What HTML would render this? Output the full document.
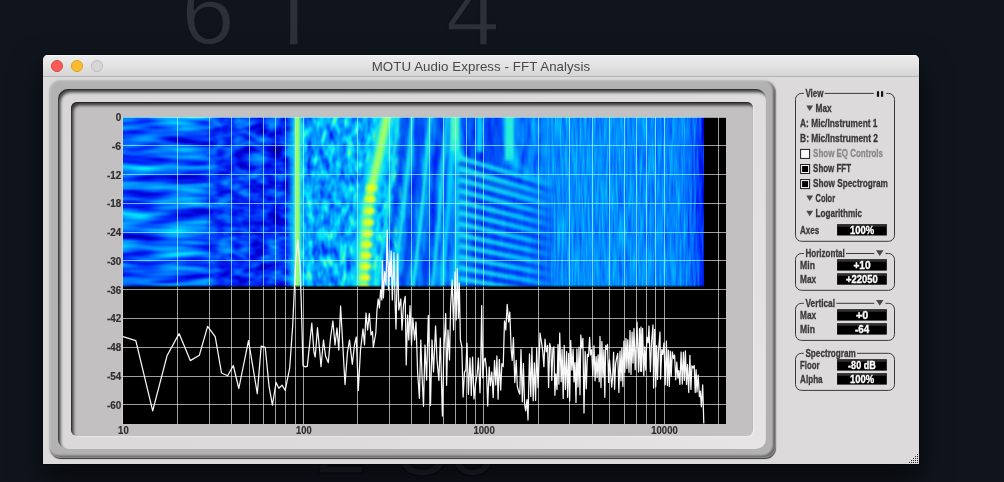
<!DOCTYPE html>
<html><head><meta charset="utf-8"><title>MOTU Audio Express - FFT Analysis</title>
<style>
html,body{margin:0;padding:0}
body{width:1004px;height:482px;overflow:hidden;position:relative;background:#10151d;font-family:"Liberation Sans",sans-serif}
.bg{position:absolute;left:0;top:0;width:1004px;height:482px;background:#10151d}
.clk{position:absolute;font-size:97px;line-height:97px;height:97px;color:#2b303a;white-space:pre;-webkit-text-stroke:1.7px #0f141b}
.win{position:absolute;left:43px;top:55px;width:876px;height:409px;background:#dcdadb;border-radius:5px 5px 0 0;overflow:hidden;box-shadow:0 0 0 .5px rgba(0,0,0,.6),0 14px 30px 2px rgba(0,0,0,.6)}
.tb{position:absolute;left:0;top:0;width:876px;height:21px;background:linear-gradient(#ececec,#e4e4e4 45%,#d5d5d5);border-bottom:1px solid #b4b2b3;box-shadow:inset 0 1px 0 #f6f6f6}
.tl{position:absolute;top:5px;width:12px;height:12px;border-radius:50%;box-sizing:border-box}
.title{position:absolute;left:0;top:1px;width:876px;height:22px;line-height:22px;text-align:center;font-size:13.3px;letter-spacing:.07px;color:#4a4849;will-change:transform}
.b1{position:absolute;left:6.5px;top:26px;width:725.5px;height:375.8px;border-radius:11px;background:#b2b2b2;box-shadow:0 0 1.5px .5px rgba(180,180,180,.85),.7px 1.3px .8px rgba(0,0,0,.85),inset .6px .6px 1px rgba(198,198,198,.7),inset -2px -1.6px 2px rgba(0,0,0,.42)}
.b2{position:absolute;left:15px;top:34px;width:708px;height:360px;border-radius:10px;background:linear-gradient(135deg,#d8d6d7 0%,#dcdadb 55%,#e6e4e5 100%);box-shadow:inset 2.6px 3.4px 3px rgba(0,0,0,.66),inset .6px 1px 1px rgba(0,0,0,.45)}
.b3{position:absolute;left:28px;top:47px;width:682px;height:333.5px;border-radius:6px;background:#c2c0c1;box-shadow:inset 2.6px 3.4px 3px rgba(0,0,0,.68),inset .6px 1px 1px rgba(0,0,0,.45),1px 1px 1.5px rgba(255,255,255,.4)}
svg{position:absolute;left:0;top:0;will-change:transform}
</style></head><body>
<div class="bg"></div>
<div class="clk" style="left:181px;top:-38px">6</div>
<div class="clk" style="left:265px;top:-37.5px;clip-path:inset(0 21.4px 0 25px)">1</div>
<div class="clk" style="left:445.7px;top:-37.5px">4</div>
<div class="clk" style="left:314px;top:391px;color:#1f232c;-webkit-text-stroke-color:#0b0e14">2</div>
<div class="clk" style="left:395.5px;top:393px;color:#1f232c;-webkit-text-stroke-color:#0b0e14">3</div>
<div class="clk" style="left:446px;top:392.5px;color:#1f232c;-webkit-text-stroke-color:#0b0e14">0</div>
<div class="win">
<div class="tb"></div>
<div class="tl" style="left:8px;background:#fc5b57;border:.8px solid #dd423d"></div>
<div class="tl" style="left:28px;background:#fdbc2e;border:.8px solid #d9a022"></div>
<div class="tl" style="left:48px;background:#d6d6d6;border:.8px solid #bcbcbc"></div>
<div class="title">MOTU Audio Express - FFT Analysis</div>
<div class="b1"></div><div class="b2"></div><div class="b3"></div>
</div>

<svg width="1004" height="482" viewBox="0 0 1004 482" font-family="'Liberation Sans',sans-serif">
<rect x="123.0" y="117.0" width="603.0" height="307.0" fill="#000"/>
<defs>
<clipPath id="cs"><rect x="123" y="117" width="581" height="170"/></clipPath>
<filter id="fA" filterUnits="userSpaceOnUse" x="123" y="117" width="96" height="170" color-interpolation-filters="sRGB"><feTurbulence type="fractalNoise" baseFrequency=".019 .115" numOctaves="2" seed="7" result="n"/><feColorMatrix in="n" type="matrix" values="1 0 0 0 0 1 0 0 0 0 1 0 0 0 0 0 0 0 0 1" result="ng"/><feComposite in="SourceGraphic" in2="ng" operator="arithmetic" k1="0" k2="1" k3="0.88" k4="-0.440" result="s"/><feComponentTransfer in="s"><feFuncR type="table" tableValues="0.000 0.000 0.000 0.000 0.000 0.000 0.353 0.745 1.000"/><feFuncG type="table" tableValues="0.000 0.000 0.176 0.431 0.647 0.882 1.000 1.000 1.000"/><feFuncB type="table" tableValues="0.588 0.843 0.980 1.000 1.000 1.000 0.667 0.275 0.000"/></feComponentTransfer></filter>
<linearGradient id="gA" x1="110" x2="225" gradientUnits="userSpaceOnUse"><stop offset="0.000" stop-color="#5c5c5c"/><stop offset="0.348" stop-color="#595959"/><stop offset="1.000" stop-color="#4f4f4f"/></linearGradient>
<filter id="fB" filterUnits="userSpaceOnUse" x="205" y="117" width="96" height="170" color-interpolation-filters="sRGB"><feTurbulence type="fractalNoise" baseFrequency=".06 .11" numOctaves="2" seed="3" result="n"/><feColorMatrix in="n" type="matrix" values="1 0 0 0 0 1 0 0 0 0 1 0 0 0 0 0 0 0 0 1" result="ng"/><feComposite in="SourceGraphic" in2="ng" operator="arithmetic" k1="0" k2="1" k3="0.66" k4="-0.330" result="s"/><feComponentTransfer in="s"><feFuncR type="table" tableValues="0.000 0.000 0.000 0.000 0.000 0.000 0.353 0.745 1.000"/><feFuncG type="table" tableValues="0.000 0.000 0.176 0.431 0.647 0.882 1.000 1.000 1.000"/><feFuncB type="table" tableValues="0.588 0.843 0.980 1.000 1.000 1.000 0.667 0.275 0.000"/></feComponentTransfer></filter>
<linearGradient id="gB" x1="200" x2="300" gradientUnits="userSpaceOnUse"><stop offset="0.000" stop-color="#4c4c4c"/><stop offset="0.400" stop-color="#424242"/><stop offset="0.840" stop-color="#3e3e3e"/><stop offset="1.000" stop-color="#5c5c5c"/></linearGradient>
<linearGradient id="mgB" x1="205" x2="219" gradientUnits="userSpaceOnUse"><stop offset="0" stop-color="#000"/><stop offset="1" stop-color="#fff"/></linearGradient>
<mask id="mB" maskUnits="userSpaceOnUse" x="205" y="117" width="96" height="170"><rect x="205" y="117" width="96" height="170" fill="url(#mgB)"/></mask>
<filter id="fC" filterUnits="userSpaceOnUse" x="287" y="117" width="120" height="170" color-interpolation-filters="sRGB"><feTurbulence type="fractalNoise" baseFrequency=".15 .07" numOctaves="2" seed="11" result="n"/><feColorMatrix in="n" type="matrix" values="1 0 0 0 0 1 0 0 0 0 1 0 0 0 0 0 0 0 0 1" result="ng"/><feComposite in="SourceGraphic" in2="ng" operator="arithmetic" k1="0" k2="1" k3="0.8" k4="-0.400" result="s"/><feComponentTransfer in="s"><feFuncR type="table" tableValues="0.000 0.000 0.000 0.000 0.000 0.000 0.353 0.745 1.000"/><feFuncG type="table" tableValues="0.000 0.000 0.176 0.431 0.647 0.882 1.000 1.000 1.000"/><feFuncB type="table" tableValues="0.588 0.843 0.980 1.000 1.000 1.000 0.667 0.275 0.000"/></feComponentTransfer></filter>
<linearGradient id="gC" x1="285" x2="410" gradientUnits="userSpaceOnUse"><stop offset="0.000" stop-color="#858585"/><stop offset="0.136" stop-color="#7d7d7d"/><stop offset="0.360" stop-color="#7d7d7d"/><stop offset="0.520" stop-color="#858585"/><stop offset="0.800" stop-color="#8a8a8a"/><stop offset="1.000" stop-color="#757575"/></linearGradient>
<linearGradient id="mgC" x1="287" x2="301" gradientUnits="userSpaceOnUse"><stop offset="0" stop-color="#000"/><stop offset="1" stop-color="#fff"/></linearGradient>
<mask id="mC" maskUnits="userSpaceOnUse" x="287" y="117" width="120" height="170"><rect x="287" y="117" width="120" height="170" fill="url(#mgC)"/></mask>
<filter id="fD" filterUnits="userSpaceOnUse" x="393" y="117" width="159" height="170" color-interpolation-filters="sRGB"><feTurbulence type="fractalNoise" baseFrequency=".16 .035" numOctaves="2" seed="13" result="n"/><feColorMatrix in="n" type="matrix" values="1 0 0 0 0 1 0 0 0 0 1 0 0 0 0 0 0 0 0 1" result="ng"/><feComposite in="SourceGraphic" in2="ng" operator="arithmetic" k1="0" k2="1" k3="0.45" k4="-0.225" result="s"/><feComponentTransfer in="s"><feFuncR type="table" tableValues="0.000 0.000 0.000 0.000 0.000 0.000 0.353 0.745 1.000"/><feFuncG type="table" tableValues="0.000 0.000 0.176 0.431 0.647 0.882 1.000 1.000 1.000"/><feFuncB type="table" tableValues="0.588 0.843 0.980 1.000 1.000 1.000 0.667 0.275 0.000"/></feComponentTransfer></filter>
<linearGradient id="gD" x1="390" x2="555" gradientUnits="userSpaceOnUse"><stop offset="0.000" stop-color="#707070"/><stop offset="0.242" stop-color="#666666"/><stop offset="0.485" stop-color="#616161"/><stop offset="0.788" stop-color="#616161"/><stop offset="1.000" stop-color="#6e6e6e"/></linearGradient>
<linearGradient id="mgD" x1="393" x2="407" gradientUnits="userSpaceOnUse"><stop offset="0" stop-color="#000"/><stop offset="1" stop-color="#fff"/></linearGradient>
<mask id="mD" maskUnits="userSpaceOnUse" x="393" y="117" width="159" height="170"><rect x="393" y="117" width="159" height="170" fill="url(#mgD)"/></mask>
<filter id="fE" filterUnits="userSpaceOnUse" x="538" y="117" width="166" height="170" color-interpolation-filters="sRGB"><feTurbulence type="fractalNoise" baseFrequency=".5 .028" numOctaves="2" seed="5" result="n"/><feColorMatrix in="n" type="matrix" values="1 0 0 0 0 1 0 0 0 0 1 0 0 0 0 0 0 0 0 1" result="ng"/><feComposite in="SourceGraphic" in2="ng" operator="arithmetic" k1="0" k2="1" k3="0.36" k4="-0.180" result="s"/><feComponentTransfer in="s"><feFuncR type="table" tableValues="0.000 0.000 0.000 0.000 0.000 0.000 0.353 0.745 1.000"/><feFuncG type="table" tableValues="0.000 0.000 0.176 0.431 0.647 0.882 1.000 1.000 1.000"/><feFuncB type="table" tableValues="0.588 0.843 0.980 1.000 1.000 1.000 0.667 0.275 0.000"/></feComponentTransfer></filter>
<linearGradient id="gE" x1="535" x2="704" gradientUnits="userSpaceOnUse"><stop offset="0.000" stop-color="#737373"/><stop offset="0.385" stop-color="#737373"/><stop offset="0.858" stop-color="#6e6e6e"/><stop offset="0.941" stop-color="#595959"/><stop offset="1.000" stop-color="#333333"/></linearGradient>
<linearGradient id="mgE" x1="538" x2="552" gradientUnits="userSpaceOnUse"><stop offset="0" stop-color="#000"/><stop offset="1" stop-color="#fff"/></linearGradient>
<mask id="mE" maskUnits="userSpaceOnUse" x="538" y="117" width="166" height="170"><rect x="538" y="117" width="166" height="170" fill="url(#mgE)"/></mask>
<filter id="b1" filterUnits="userSpaceOnUse" x="100" y="90" width="640" height="230"><feGaussianBlur stdDeviation="1.1"/></filter>
<filter id="b15" filterUnits="userSpaceOnUse" x="100" y="90" width="640" height="230"><feGaussianBlur stdDeviation="1.7"/></filter>
<filter id="b2" filterUnits="userSpaceOnUse" x="100" y="90" width="640" height="230"><feGaussianBlur stdDeviation="2.4"/></filter>
<linearGradient id="sg1" x1="459" x2="556" gradientUnits="userSpaceOnUse"><stop offset="0" stop-color="#19e9e7"/><stop offset=".72" stop-color="#00d5ff" stop-opacity=".85"/><stop offset="1" stop-color="#00bdff" stop-opacity="0"/></linearGradient>
<linearGradient id="sg2" x1="459" x2="556" gradientUnits="userSpaceOnUse"><stop offset="0" stop-color="#001bec"/><stop offset=".72" stop-color="#0029f7" stop-opacity=".85"/><stop offset="1" stop-color="#0047fc" stop-opacity="0"/></linearGradient>
</defs>
<g><g filter="url(#fA)"><rect x="123" y="117" width="96" height="170" fill="url(#gA)"/></g></g>
<g mask="url(#mB)"><g filter="url(#fB)"><rect x="205" y="117" width="96" height="170" fill="url(#gB)"/></g></g>
<g mask="url(#mC)"><g filter="url(#fC)"><rect x="287" y="117" width="120" height="170" fill="url(#gC)"/></g></g>
<g mask="url(#mD)"><g filter="url(#fD)"><rect x="393" y="117" width="159" height="170" fill="url(#gD)"/></g></g>
<g mask="url(#mE)"><g filter="url(#fE)"><rect x="538" y="117" width="166" height="170" fill="url(#gE)"/></g></g>
<g clip-path="url(#cs)"><rect x="291.5" y="110" width="11.5" height="185" fill="#00dfff" filter="url(#b2)" opacity=".85"/><rect x="294.8" y="110" width="5" height="185" fill="#a2ff62" filter="url(#b1)"/><path d="M388,110 C381,150 372,185 368.5,200 C365,225 363,260 362,294" fill="none" stroke="#00d5ff" stroke-width="21" filter="url(#b2)" opacity=".8"/><path d="M388,110 C381,150 372,185 368.5,200 C365,225 363,260 362,294" fill="none" stroke="#53fdb1" stroke-width="10.5" filter="url(#b15)" opacity=".95"/><path d="M388,110 C381,150 372,185 368.5,200" fill="none" stroke="#aaff5a" stroke-width="5" filter="url(#b15)"/><ellipse cx="371.5" cy="188" rx="5.6" ry="3.8" fill="#e5ff1c" filter="url(#b15)"/><ellipse cx="370.4" cy="199.5" rx="5.6" ry="3.8" fill="#e5ff1c" filter="url(#b15)"/><ellipse cx="369.4" cy="211" rx="5.6" ry="3.8" fill="#e5ff1c" filter="url(#b15)"/><ellipse cx="368.5" cy="222.5" rx="5.6" ry="3.8" fill="#e5ff1c" filter="url(#b15)"/><ellipse cx="367.7" cy="233.5" rx="5.6" ry="3.8" fill="#e5ff1c" filter="url(#b15)"/><ellipse cx="366.9" cy="244.5" rx="5.6" ry="3.8" fill="#e5ff1c" filter="url(#b15)"/><ellipse cx="366.2" cy="255.5" rx="5.6" ry="3.8" fill="#e5ff1c" filter="url(#b15)"/><ellipse cx="365.6" cy="266.5" rx="5.6" ry="3.8" fill="#e5ff1c" filter="url(#b15)"/><ellipse cx="365.0" cy="277.5" rx="5.6" ry="3.8" fill="#e5ff1c" filter="url(#b15)"/><ellipse cx="364.5" cy="288" rx="5.6" ry="3.8" fill="#e5ff1c" filter="url(#b15)"/><path d="M406,110 Q397.5,200 383,294" fill="none" stroke="#0010e4" stroke-width="6" opacity="0.5" filter="url(#b15)"/><path d="M421.5,110 Q414.75,200 402,294" fill="none" stroke="#0010e4" stroke-width="6.5" opacity="0.55" filter="url(#b15)"/><path d="M439.5,110 Q434.0,200 422.5,294" fill="none" stroke="#0010e4" stroke-width="6" opacity="0.5" filter="url(#b15)"/><path d="M398.5,110 Q390.0,200 375.5,294" fill="none" stroke="#19e9e7" stroke-width="3.4" opacity="0.95" filter="url(#b1)"/><path d="M413,110 Q405.75,200 392.5,294" fill="none" stroke="#19e9e7" stroke-width="3.6" opacity="0.9" filter="url(#b1)"/><path d="M430.5,110 Q424.25,200 412,294" fill="none" stroke="#19e9e7" stroke-width="3.8" opacity="0.95" filter="url(#b1)"/><path d="M446.5,110 Q442.0,200 431.5,294" fill="none" stroke="#19e9e7" stroke-width="3.2" opacity="0.85" filter="url(#b1)"/><rect x="463" y="110" width="40" height="58" fill="#001bec" opacity=".45" filter="url(#b2)"/><path d="M454.7,110 V146 Q456,166 478,176 L548,204" fill="none" stroke="#00d5ff" stroke-width="13" filter="url(#b2)" opacity=".7"/><rect x="450.6" y="110" width="8.4" height="42" fill="#4cfab8" filter="url(#b1)"/><path d="M454.7,140 Q455,164 478,176 L520,193" fill="none" stroke="#28eeda" stroke-width="5.5" filter="url(#b15)" opacity=".9"/><path d="M452,150 Q448,220 441,294" fill="none" stroke="#04e2fc" stroke-width="4.5" filter="url(#b1)" opacity=".8"/><path d="M458,152 Q459,220 455,294" fill="none" stroke="#12e7ee" stroke-width="5" filter="url(#b1)" opacity=".8"/><rect x="503" y="110" width="13" height="54" fill="#00cbff" filter="url(#b2)" opacity=".7"/><rect x="505.3" y="110" width="8.4" height="50" fill="#28eeda" filter="url(#b1)"/><rect x="476.8" y="110" width="5.6" height="42" fill="#00dfff" filter="url(#b1)" opacity=".85"/><path d="M510,156 Q522,172 550,186" fill="none" stroke="#00d5ff" stroke-width="5" opacity=".6" filter="url(#b2)"/><path d="M459,160 L552,186 V294 H459Z" fill="#001bec" opacity=".35" filter="url(#b2)"/><path d="M459,158.0 L556,187.1" fill="none" stroke="url(#sg1)" stroke-width="5.2" opacity=".95" filter="url(#b15)"/><path d="M459,163.5 L556,192.6" fill="none" stroke="url(#sg2)" stroke-width="5.4" opacity=".6" filter="url(#b15)"/><path d="M459,169.0 L556,196.9" fill="none" stroke="url(#sg1)" stroke-width="5.2" opacity=".95" filter="url(#b15)"/><path d="M459,174.5 L556,202.4" fill="none" stroke="url(#sg2)" stroke-width="5.4" opacity=".6" filter="url(#b15)"/><path d="M459,180.0 L556,206.8" fill="none" stroke="url(#sg1)" stroke-width="5.2" opacity=".95" filter="url(#b15)"/><path d="M459,185.5 L556,212.3" fill="none" stroke="url(#sg2)" stroke-width="5.4" opacity=".6" filter="url(#b15)"/><path d="M459,191.0 L556,216.6" fill="none" stroke="url(#sg1)" stroke-width="5.2" opacity=".95" filter="url(#b15)"/><path d="M459,196.5 L556,222.1" fill="none" stroke="url(#sg2)" stroke-width="5.4" opacity=".6" filter="url(#b15)"/><path d="M459,202.0 L556,226.4" fill="none" stroke="url(#sg1)" stroke-width="5.2" opacity=".95" filter="url(#b15)"/><path d="M459,207.5 L556,231.9" fill="none" stroke="url(#sg2)" stroke-width="5.4" opacity=".6" filter="url(#b15)"/><path d="M459,213.0 L556,236.3" fill="none" stroke="url(#sg1)" stroke-width="5.2" opacity=".95" filter="url(#b15)"/><path d="M459,218.5 L556,241.8" fill="none" stroke="url(#sg2)" stroke-width="5.4" opacity=".6" filter="url(#b15)"/><path d="M459,224.0 L556,246.1" fill="none" stroke="url(#sg1)" stroke-width="5.2" opacity=".95" filter="url(#b15)"/><path d="M459,229.5 L556,251.6" fill="none" stroke="url(#sg2)" stroke-width="5.4" opacity=".6" filter="url(#b15)"/><path d="M459,235.0 L556,256.0" fill="none" stroke="url(#sg1)" stroke-width="5.2" opacity=".95" filter="url(#b15)"/><path d="M459,240.5 L556,261.5" fill="none" stroke="url(#sg2)" stroke-width="5.4" opacity=".6" filter="url(#b15)"/><path d="M459,246.0 L556,265.8" fill="none" stroke="url(#sg1)" stroke-width="5.2" opacity=".95" filter="url(#b15)"/><path d="M459,251.5 L556,271.3" fill="none" stroke="url(#sg2)" stroke-width="5.4" opacity=".6" filter="url(#b15)"/><path d="M459,257.0 L556,275.6" fill="none" stroke="url(#sg1)" stroke-width="5.2" opacity=".95" filter="url(#b15)"/><path d="M459,262.5 L556,281.1" fill="none" stroke="url(#sg2)" stroke-width="5.4" opacity=".6" filter="url(#b15)"/><path d="M459,268.0 L556,285.5" fill="none" stroke="url(#sg1)" stroke-width="5.2" opacity=".95" filter="url(#b15)"/><path d="M459,273.5 L556,291.0" fill="none" stroke="url(#sg2)" stroke-width="5.4" opacity=".6" filter="url(#b15)"/><path d="M459,279.0 L556,295.3" fill="none" stroke="url(#sg1)" stroke-width="5.2" opacity=".95" filter="url(#b15)"/><path d="M459,284.5 L556,300.8" fill="none" stroke="url(#sg2)" stroke-width="5.4" opacity=".6" filter="url(#b15)"/><path d="M459,290.0 L556,305.1" fill="none" stroke="url(#sg1)" stroke-width="5.2" opacity=".95" filter="url(#b15)"/><path d="M459,295.5 L556,310.6" fill="none" stroke="url(#sg2)" stroke-width="5.4" opacity=".6" filter="url(#b15)"/><rect x="456" y="166" width="14" height="130" fill="#00dfff" opacity=".35" filter="url(#b2)"/></g>
<defs><clipPath id="clA"><rect x="123" y="117" width="581" height="170"/></clipPath><clipPath id="clB"><path d="M123,287H704V117H726V424H123Z"/></clipPath></defs>
<g id="grid" fill="#fff" fill-opacity=".62" shape-rendering="crispEdges" clip-path="url(#clB)"><rect x="177" y="117.0" width="1" height="307.0"/><rect x="209" y="117.0" width="1" height="307.0"/><rect x="231" y="117.0" width="1" height="307.0"/><rect x="249" y="117.0" width="1" height="307.0"/><rect x="263" y="117.0" width="1" height="307.0"/><rect x="275" y="117.0" width="1" height="307.0"/><rect x="285" y="117.0" width="1" height="307.0"/><rect x="295" y="117.0" width="1" height="307.0"/><rect x="303" y="117.0" width="1" height="307.0"/><rect x="357" y="117.0" width="1" height="307.0"/><rect x="389" y="117.0" width="1" height="307.0"/><rect x="411" y="117.0" width="1" height="307.0"/><rect x="429" y="117.0" width="1" height="307.0"/><rect x="443" y="117.0" width="1" height="307.0"/><rect x="455" y="117.0" width="1" height="307.0"/><rect x="466" y="117.0" width="1" height="307.0"/><rect x="475" y="117.0" width="1" height="307.0"/><rect x="483" y="117.0" width="1" height="307.0"/><rect x="538" y="117.0" width="1" height="307.0"/><rect x="569" y="117.0" width="1" height="307.0"/><rect x="592" y="117.0" width="1" height="307.0"/><rect x="609" y="117.0" width="1" height="307.0"/><rect x="624" y="117.0" width="1" height="307.0"/><rect x="636" y="117.0" width="1" height="307.0"/><rect x="646" y="117.0" width="1" height="307.0"/><rect x="655" y="117.0" width="1" height="307.0"/><rect x="664" y="117.0" width="1" height="307.0"/><rect x="718" y="117.0" width="1" height="307.0"/><rect x="123.0" y="117" width="603.0" height="1"/><rect x="123.0" y="145" width="603.0" height="1"/><rect x="123.0" y="174" width="603.0" height="1"/><rect x="123.0" y="203" width="603.0" height="1"/><rect x="123.0" y="232" width="603.0" height="1"/><rect x="123.0" y="260" width="603.0" height="1"/><rect x="123.0" y="289" width="603.0" height="1"/><rect x="123.0" y="318" width="603.0" height="1"/><rect x="123.0" y="347" width="603.0" height="1"/><rect x="123.0" y="376" width="603.0" height="1"/><rect x="123.0" y="404" width="603.0" height="1"/></g>
<g fill="#a8ffff" fill-opacity=".66" shape-rendering="crispEdges" clip-path="url(#clA)"><rect x="177" y="117.0" width="1" height="307.0"/><rect x="209" y="117.0" width="1" height="307.0"/><rect x="231" y="117.0" width="1" height="307.0"/><rect x="249" y="117.0" width="1" height="307.0"/><rect x="263" y="117.0" width="1" height="307.0"/><rect x="275" y="117.0" width="1" height="307.0"/><rect x="285" y="117.0" width="1" height="307.0"/><rect x="295" y="117.0" width="1" height="307.0"/><rect x="303" y="117.0" width="1" height="307.0"/><rect x="357" y="117.0" width="1" height="307.0"/><rect x="389" y="117.0" width="1" height="307.0"/><rect x="411" y="117.0" width="1" height="307.0"/><rect x="429" y="117.0" width="1" height="307.0"/><rect x="443" y="117.0" width="1" height="307.0"/><rect x="455" y="117.0" width="1" height="307.0"/><rect x="466" y="117.0" width="1" height="307.0"/><rect x="475" y="117.0" width="1" height="307.0"/><rect x="483" y="117.0" width="1" height="307.0"/><rect x="538" y="117.0" width="1" height="307.0"/><rect x="569" y="117.0" width="1" height="307.0"/><rect x="592" y="117.0" width="1" height="307.0"/><rect x="609" y="117.0" width="1" height="307.0"/><rect x="624" y="117.0" width="1" height="307.0"/><rect x="636" y="117.0" width="1" height="307.0"/><rect x="646" y="117.0" width="1" height="307.0"/><rect x="655" y="117.0" width="1" height="307.0"/><rect x="664" y="117.0" width="1" height="307.0"/><rect x="718" y="117.0" width="1" height="307.0"/><rect x="123.0" y="117" width="603.0" height="1"/><rect x="123.0" y="145" width="603.0" height="1"/><rect x="123.0" y="174" width="603.0" height="1"/><rect x="123.0" y="203" width="603.0" height="1"/><rect x="123.0" y="232" width="603.0" height="1"/><rect x="123.0" y="260" width="603.0" height="1"/><rect x="123.0" y="289" width="603.0" height="1"/><rect x="123.0" y="318" width="603.0" height="1"/><rect x="123.0" y="347" width="603.0" height="1"/><rect x="123.0" y="376" width="603.0" height="1"/><rect x="123.0" y="404" width="603.0" height="1"/></g>
<rect x="122" y="117" width="1" height="307" fill="#fff" fill-opacity=".3"/>
<rect x="123" y="285.3" width="581" height="1" fill="#000" fill-opacity=".3"/><rect x="123" y="286.2" width="581" height=".9" fill="#000" fill-opacity=".7"/>
<polyline points="123.0,336.7 135.8,340.6 152.7,410.9 167.0,355.8 179.1,333.6 190.3,360.6 199.4,355.2 207.6,326.4 215.2,336.7 221.5,373.0 227.6,375.8 233.3,365.5 238.8,388.5 248.5,340.6 257.3,393.6 261.2,346.1 265.2,347.3 269.1,386.7 272.4,405.2 276.1,382.4 278.8,388.2 282.0,385.2 285.2,390.3 289.7,367.9 292.7,325.5 295.6,262.0 297.7,239.6 299.8,262.0 301.2,300.0 303.0,365.8 305.4,366.9 307.3,366.4 311.8,323.2 314.0,352.7 315.2,357.0 317.5,327.7 319.8,352.0 321.0,366.7 323.5,340.0 325.5,356.0 328.3,362.6 330.5,338.0 332.9,321.0 335.0,345.0 337.0,328.0 338.8,350.0 340.6,306.0 342.5,340.0 345.0,384.5 347.5,352.0 349.5,340.0 352.3,364.3 354.5,345.0 356.3,337.0 358.3,390.5 360.5,350.0 363.0,329.0 364.5,345.0 366.0,313.0 367.6,330.0 369.3,313.5 371.0,335.0 372.5,331.6 373.3,347.3 375.8,333.0 377.0,310.0 378.2,299.0 379.4,308.0 380.6,290.0 381.8,300.0 382.4,260.7 383.4,298.0 384.7,271.7 386.0,285.0 387.2,230.2 388.5,290.0 389.4,262.0 390.3,276.6 391.1,251.2 392.3,300.0 394.0,252.7 395.0,300.0 396.0,329.0 397.6,254.1 398.8,310.0 400.8,299.0 402.0,330.0 403.5,305.0 405.2,296.3 406.2,365.0 407.6,315.0 408.8,340.0 410.0,305.7 411.5,345.0 412.8,318.0 414.6,340.0 416.0,322.0 417.6,372.0 419.4,398.3 420.8,340.0 422.0,375.0 423.5,406.3 425.0,345.0 426.6,380.0 428.3,315.4 429.5,365.0 430.5,405.5 432.0,340.0 433.5,372.0 435.6,326.0 437.0,360.0 438.9,380.5 440.3,338.0 442.4,416.0 443.8,352.0 445.7,313.5 446.6,385.3 448.0,330.0 449.5,360.0 450.6,306.5 452.2,280.0 453.6,330.0 455.0,272.0 456.2,320.0 457.3,268.5 458.4,318.0 459.3,283.0 460.4,340.0 461.8,346.4 463.1,396.9 464.5,372.2 465.8,370.2 467.0,343.1 468.4,394.3 470.0,358.0 471.3,395.5 472.6,357.1 474.0,398.9 475.6,383.4 477.1,374.9 478.4,358.0 480.0,392.8 480.6,372.0 481.7,305.7 482.8,378.0 484.0,360.4 485.2,358.1 486.4,368.1 487.7,406.1 489.2,366.8 490.4,385.6 491.8,372.0 493.2,397.6 494.5,360.3 495.8,385.0 496.9,356.0 498.1,399.2 499.3,359.3 500.7,390.0 501.9,363.6 503.2,366.6 504.5,320.9 505.8,330.0 507.2,304.4 508.6,322.0 509.8,312.0 511.2,350.0 512.2,360.4 513.4,337.7 514.8,382.6 516.2,360.3 517.3,386.5 518.7,391.7 519.8,394.1 521.0,349.4 522.3,401.8 523.4,363.3 524.6,404.4 525.7,410.8 527.0,399.6 528.0,420.0 529.5,353.9 530.8,396.4 531.9,347.3 533.2,400.8 534.4,362.9 535.6,400.5 536.7,347.9 538.0,387.5 539.3,355.4 540.0,333.0 541.7,343.9 542.7,351.0 543.9,366.6 545.0,339.2 546.3,351.8 547.6,345.5 548.6,387.5 549.7,343.5 550.9,348.2 551.8,380.5 552.9,348.2 553.9,346.8 554.9,395.3 555.8,373.9 557.0,389.6 558.0,344.5 558.9,384.2 559.7,333.0 561.2,381.7 562.1,349.3 563.2,398.6 564.2,345.4 565.4,389.5 566.6,351.6 567.7,397.4 568.7,353.5 569.7,400.9 570.7,340.3 571.9,370.1 573.1,349.1 574.0,381.9 575.0,362.7 576.0,402.4 576.9,349.0 578.0,387.0 579.0,347.2 580.0,394.8 580.8,335.0 581.9,347.9 582.9,338.3 584.0,413.0 585.2,351.5 586.3,388.8 587.4,354.2 588.5,356.5 589.6,337.4 590.5,354.9 591.7,349.7 592.8,375.9 594.0,345.8 595.1,380.8 596.1,356.6 597.1,377.4 598.1,354.8 599.2,381.7 600.0,336.5 601.0,387.6 601.9,341.5 602.9,377.2 603.9,349.8 604.8,397.3 605.7,345.4 606.6,349.4 607.5,344.3 608.6,382.4 609.5,359.8 610.6,373.2 611.7,387.1 612.6,377.8 613.6,352.3 614.6,389.3 615.6,363.9 616.6,358.1 617.7,353.4 618.9,392.4 620.0,351.2 621.0,380.9 621.9,348.0 622.9,386.6 623.9,341.2 624.8,372.3 626.0,338.5 626.9,368.5 627.8,339.8 629.0,372.3 630.0,330.5 631.0,374.4 632.1,332.2 633.0,363.1 634.0,328.5 635.2,369.7 636.4,338.8 637.0,322.0 638.5,372.1 639.5,328.7 640.4,371.2 641.0,327.0 641.6,371.3 642.6,328.3 643.8,375.6 644.8,346.9 645.7,370.1 646.9,337.2 648.1,342.7 649.0,326.0 650.4,371.7 651.5,342.3 653.0,325.0 653.6,388.1 654.7,329.4 655.7,386.7 656.6,345.7 657.5,379.4 658.5,350.8 660.0,332.0 660.6,378.9 661.8,349.7 662.8,354.4 664.0,342.8 665.2,384.8 666.4,341.0 667.4,385.4 668.3,350.0 669.3,386.4 670.3,351.2 671.2,376.5 672.3,351.8 673.5,358.3 674.6,355.0 675.7,379.8 676.8,362.2 677.9,378.0 678.8,370.5 679.9,384.4 681.1,352.0 682.3,384.1 683.4,352.2 684.4,380.3 685.4,350.8 686.5,384.4 687.5,364.4 688.7,392.5 689.9,355.3 690.9,389.4 691.9,365.9 693.1,368.0 694.2,365.6 695.2,392.6 696.1,369.7 697.0,392.0 698.2,375.0 699.4,396.7 700.3,391.2 701.4,406.8 702.7,384.8 703.8,423.5" fill="none" stroke="#fff" stroke-width="1.25" stroke-linejoin="round" stroke-opacity=".97"/>
<g font-size="10.3" font-weight="bold" fill="#2f2d2e" stroke="#2f2d2e" stroke-width=".18"><text x="115.7" y="120.9" textLength="5.5" lengthAdjust="spacingAndGlyphs">0</text><text x="111.8" y="149.7" textLength="9.4" lengthAdjust="spacingAndGlyphs">-6</text><text x="106.9" y="178.5" textLength="14.3" lengthAdjust="spacingAndGlyphs">-12</text><text x="106.9" y="207.2" textLength="14.3" lengthAdjust="spacingAndGlyphs">-18</text><text x="106.9" y="236.0" textLength="14.3" lengthAdjust="spacingAndGlyphs">-24</text><text x="106.9" y="264.8" textLength="14.3" lengthAdjust="spacingAndGlyphs">-30</text><text x="106.9" y="293.6" textLength="14.3" lengthAdjust="spacingAndGlyphs">-36</text><text x="106.9" y="322.4" textLength="14.3" lengthAdjust="spacingAndGlyphs">-42</text><text x="106.9" y="351.1" textLength="14.3" lengthAdjust="spacingAndGlyphs">-48</text><text x="106.9" y="379.9" textLength="14.3" lengthAdjust="spacingAndGlyphs">-54</text><text x="106.9" y="408.7" textLength="14.3" lengthAdjust="spacingAndGlyphs">-60</text><text x="118.1" y="433.7" textLength="10.6" lengthAdjust="spacingAndGlyphs">10</text><text x="296.0" y="433.7" textLength="15.6" lengthAdjust="spacingAndGlyphs">100</text><text x="473.4" y="433.7" textLength="21.4" lengthAdjust="spacingAndGlyphs">1000</text><text x="651.3" y="433.7" textLength="26.4" lengthAdjust="spacingAndGlyphs">10000</text></g>
<path d="M824.7,93.4 H873.8 M886.3,93.4 H888.5 A6,6 0 0 1 894.5,99.4 V235.3 A6,6 0 0 1 888.5,241.3 H801.5 A6,6 0 0 1 795.5,235.3 V99.4 A6,6 0 0 1 801.5,93.4 H803.9" fill="none" stroke="#3a3839" stroke-width="1"/>
<text x="805.4" y="96.6" textLength="18.1" lengthAdjust="spacingAndGlyphs" font-size="10" font-weight="bold" fill="#3b393a" stroke="#3b393a" stroke-width=".3">View</text>
<rect x="876.9" y="91.2" width="2.2" height="5.6" fill="#111"/><rect x="881" y="91.2" width="2.2" height="5.6" fill="#111"/>
<path d="M806.3,105.5 h6.8 l-3.4,5.5z" fill="#4a4849"/>
<text x="815.5" y="111.5" textLength="16.1" lengthAdjust="spacingAndGlyphs" font-size="10" font-weight="bold" fill="#3b393a" stroke="#3b393a" stroke-width=".3">Max</text>
<text x="800.1" y="126.7" textLength="77.4" lengthAdjust="spacingAndGlyphs" font-size="10" font-weight="bold" fill="#3b393a" stroke="#3b393a" stroke-width=".3">A: Mic/Instrument 1</text>
<text x="800.1" y="141.6" textLength="77.9" lengthAdjust="spacingAndGlyphs" font-size="10" font-weight="bold" fill="#3b393a" stroke="#3b393a" stroke-width=".3">B: Mic/Instrument 2</text>
<rect x="800.6" y="149.4" width="9" height="9" fill="#fff" stroke="#1c1a1b" stroke-width="1"/>
<text x="813.1" y="156.7" textLength="69.9" lengthAdjust="spacingAndGlyphs" font-size="10" font-weight="bold" fill="#8b898a" stroke="#8b898a" stroke-width=".3">Show EQ Controls</text>
<rect x="800.6" y="164.5" width="9" height="9" fill="#fff" stroke="#1c1a1b" stroke-width="1"/>
<rect x="802.1" y="166.0" width="6" height="6" fill="#000"/>
<text x="813.1" y="171.8" textLength="37.9" lengthAdjust="spacingAndGlyphs" font-size="10" font-weight="bold" fill="#3b393a" stroke="#3b393a" stroke-width=".3">Show FFT</text>
<rect x="800.6" y="179.6" width="9" height="9" fill="#fff" stroke="#1c1a1b" stroke-width="1"/>
<rect x="802.1" y="181.1" width="6" height="6" fill="#000"/>
<text x="813.1" y="186.9" textLength="74.8" lengthAdjust="spacingAndGlyphs" font-size="10" font-weight="bold" fill="#3b393a" stroke="#3b393a" stroke-width=".3">Show Spectrogram</text>
<path d="M806.3,195.6 h6.8 l-3.4,5.5z" fill="#4a4849"/>
<text x="815.5" y="201.6" textLength="19.6" lengthAdjust="spacingAndGlyphs" font-size="10" font-weight="bold" fill="#3b393a" stroke="#3b393a" stroke-width=".3">Color</text>
<path d="M806.3,210.7 h6.8 l-3.4,5.5z" fill="#4a4849"/>
<text x="815.5" y="216.6" textLength="46.5" lengthAdjust="spacingAndGlyphs" font-size="10" font-weight="bold" fill="#3b393a" stroke="#3b393a" stroke-width=".3">Logarithmic</text>
<text x="800.1" y="233.6" textLength="19.1" lengthAdjust="spacingAndGlyphs" font-size="10" font-weight="bold" fill="#3b393a" stroke="#3b393a" stroke-width=".3">Axes</text>
<rect x="837.1" y="224.3" width="49.7" height="11.2" fill="#000"/><rect x="837.1" y="224.3" width="49.7" height="2.4" fill="#2e2e2e"/>
<text x="849.9" y="233.9" textLength="24.2" lengthAdjust="spacingAndGlyphs" font-size="11.2" font-weight="bold" fill="#fff" stroke="#fff" stroke-width=".35">100%</text>
<path d="M846.0,253.5 H874.3 M885.5,253.5 H888.5 A6,6 0 0 1 894.5,259.5 V284.3 A6,6 0 0 1 888.5,290.3 H801.5 A6,6 0 0 1 795.5,284.3 V259.5 A6,6 0 0 1 801.5,253.5 H803.9" fill="none" stroke="#3a3839" stroke-width="1"/>
<text x="805.4" y="256.7" textLength="39.4" lengthAdjust="spacingAndGlyphs" font-size="10" font-weight="bold" fill="#3b393a" stroke="#3b393a" stroke-width=".3">Horizontal</text>
<path d="M876,250.3 h7.5 l-3.75,5.6z" fill="#4a4849"/>
<text x="800.1" y="268.6" textLength="14.8" lengthAdjust="spacingAndGlyphs" font-size="10" font-weight="bold" fill="#3b393a" stroke="#3b393a" stroke-width=".3">Min</text>
<rect x="837.1" y="259.4" width="49.7" height="11.2" fill="#000"/><rect x="837.1" y="259.4" width="49.7" height="2.4" fill="#2e2e2e"/>
<text x="853.4" y="269.0" textLength="17.3" lengthAdjust="spacingAndGlyphs" font-size="11.2" font-weight="bold" fill="#fff" stroke="#fff" stroke-width=".35">+10</text>
<text x="800.1" y="282.7" textLength="16.1" lengthAdjust="spacingAndGlyphs" font-size="10" font-weight="bold" fill="#3b393a" stroke="#3b393a" stroke-width=".3">Max</text>
<rect x="837.1" y="273.5" width="49.7" height="11.2" fill="#000"/><rect x="837.1" y="273.5" width="49.7" height="2.4" fill="#2e2e2e"/>
<text x="846.0" y="283.1" textLength="31.9" lengthAdjust="spacingAndGlyphs" font-size="11.2" font-weight="bold" fill="#fff" stroke="#fff" stroke-width=".35">+22050</text>
<path d="M836.3000000000001,303.3 H874.3 M885.5,303.3 H888.5 A6,6 0 0 1 894.5,309.3 V334.4 A6,6 0 0 1 888.5,340.4 H801.5 A6,6 0 0 1 795.5,334.4 V309.3 A6,6 0 0 1 801.5,303.3 H803.9" fill="none" stroke="#3a3839" stroke-width="1"/>
<text x="805.4" y="306.5" textLength="29.7" lengthAdjust="spacingAndGlyphs" font-size="10" font-weight="bold" fill="#3b393a" stroke="#3b393a" stroke-width=".3">Vertical</text>
<path d="M876,300.1 h7.5 l-3.75,5.6z" fill="#4a4849"/>
<text x="800.1" y="318.5" textLength="16.1" lengthAdjust="spacingAndGlyphs" font-size="10" font-weight="bold" fill="#3b393a" stroke="#3b393a" stroke-width=".3">Max</text>
<rect x="837.1" y="309.4" width="49.7" height="11.2" fill="#000"/><rect x="837.1" y="309.4" width="49.7" height="2.4" fill="#2e2e2e"/>
<text x="855.9" y="319.0" textLength="12.3" lengthAdjust="spacingAndGlyphs" font-size="11.2" font-weight="bold" fill="#fff" stroke="#fff" stroke-width=".35">+0</text>
<text x="800.1" y="332.6" textLength="14.8" lengthAdjust="spacingAndGlyphs" font-size="10" font-weight="bold" fill="#3b393a" stroke="#3b393a" stroke-width=".3">Min</text>
<rect x="837.1" y="323.4" width="49.7" height="11.2" fill="#000"/><rect x="837.1" y="323.4" width="49.7" height="2.4" fill="#2e2e2e"/>
<text x="854.9" y="333.0" textLength="14.3" lengthAdjust="spacingAndGlyphs" font-size="11.2" font-weight="bold" fill="#fff" stroke="#fff" stroke-width=".35">-64</text>
<path d="M857.0,353.3 H888.5 A6,6 0 0 1 894.5,359.3 V384.4 A6,6 0 0 1 888.5,390.4 H801.5 A6,6 0 0 1 795.5,384.4 V359.3 A6,6 0 0 1 801.5,353.3 H803.9" fill="none" stroke="#3a3839" stroke-width="1"/>
<text x="805.4" y="356.5" textLength="50.4" lengthAdjust="spacingAndGlyphs" font-size="10" font-weight="bold" fill="#3b393a" stroke="#3b393a" stroke-width=".3">Spectrogram</text>
<text x="800.1" y="368.5" textLength="19.5" lengthAdjust="spacingAndGlyphs" font-size="10" font-weight="bold" fill="#3b393a" stroke="#3b393a" stroke-width=".3">Floor</text>
<rect x="837.1" y="359.4" width="49.7" height="11.2" fill="#000"/><rect x="837.1" y="359.4" width="49.7" height="2.4" fill="#2e2e2e"/>
<text x="848.1" y="369.0" textLength="27.7" lengthAdjust="spacingAndGlyphs" font-size="11.2" font-weight="bold" fill="#fff" stroke="#fff" stroke-width=".35">-80 dB</text>
<text x="800.1" y="382.6" textLength="22.5" lengthAdjust="spacingAndGlyphs" font-size="10" font-weight="bold" fill="#3b393a" stroke="#3b393a" stroke-width=".3">Alpha</text>
<rect x="837.1" y="373.4" width="49.7" height="11.2" fill="#000"/><rect x="837.1" y="373.4" width="49.7" height="2.4" fill="#2e2e2e"/>
<text x="849.9" y="383.0" textLength="24.2" lengthAdjust="spacingAndGlyphs" font-size="11.2" font-weight="bold" fill="#fff" stroke="#fff" stroke-width=".35">100%</text>
<g fill="#2a2a2a" shape-rendering="crispEdges"><rect x="917" y="454" width="1" height="1"/><rect x="917" y="456" width="1" height="1"/><rect x="915" y="456" width="1" height="1"/><rect x="917" y="458" width="1" height="1"/><rect x="915" y="458" width="1" height="1"/><rect x="913" y="458" width="1" height="1"/><rect x="917" y="460" width="1" height="1"/><rect x="915" y="460" width="1" height="1"/><rect x="913" y="460" width="1" height="1"/><rect x="911" y="460" width="1" height="1"/><rect x="917" y="462" width="1" height="1"/><rect x="915" y="462" width="1" height="1"/><rect x="913" y="462" width="1" height="1"/><rect x="911" y="462" width="1" height="1"/><rect x="909" y="462" width="1" height="1"/></g>
</svg>
</body></html>
